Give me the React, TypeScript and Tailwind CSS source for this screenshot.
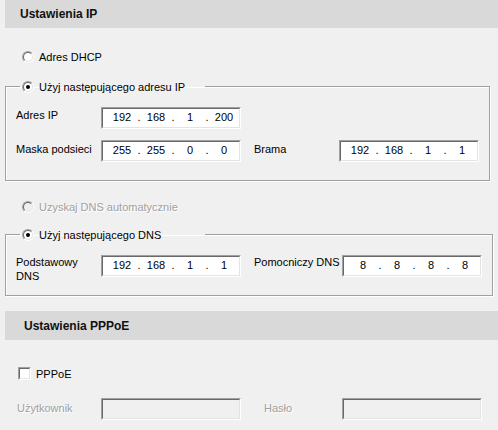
import React from "react";

function Radio({ checked, disabled }: { checked?: boolean; disabled?: boolean }) {
  return (
    <span className="flex h-[12px] w-[12px] shrink-0 rounded-full border border-t-[#a0a0a0] border-l-[#a0a0a0] border-b-[#ffffff] border-r-[#ffffff]">
      <span
        className={
          "flex flex-1 items-center justify-center rounded-full border border-t-[#696969] border-l-[#696969] border-b-[#e3e3e3] border-r-[#e3e3e3] " +
          (disabled ? "bg-[#f0f0f0]" : "bg-white")
        }
      >
        {checked ? <span className="h-[4px] w-[4px] rounded-full bg-black" /> : null}
      </span>
    </span>
  );
}

function Checkbox() {
  return (
    <span className="flex h-[13px] w-[13px] shrink-0 border border-t-[#a0a0a0] border-l-[#a0a0a0] border-b-[#ffffff] border-r-[#ffffff]">
      <span className="flex-1 border border-t-[#696969] border-l-[#696969] border-b-[#e3e3e3] border-r-[#e3e3e3] bg-white" />
    </span>
  );
}

function Sunken({ children, disabled, w = "w-[140px]" }: { children?: React.ReactNode; disabled?: boolean; w?: string }) {
  return (
    <div className={"flex h-[22px] shrink-0 border border-t-[#a0a0a0] border-l-[#a0a0a0] border-b-[#ffffff] border-r-[#ffffff] " + w}>
      <div
        className={
          "flex flex-1 items-start border border-t-[#696969] border-l-[#696969] border-b-[#e3e3e3] border-r-[#e3e3e3] " +
          (disabled ? "bg-[#f0f0f0]" : "bg-white")
        }
      >
        {children}
      </div>
    </div>
  );
}

function IpField({ parts }: { parts: string[] }) {
  return (
    <Sunken>
      <div className="flex pl-[4px] pt-[1px] leading-[14px]">
        {parts.map((p, i) => (
          <React.Fragment key={i}>
            {i > 0 ? <span className="w-[4px] text-center">.</span> : null}
            <span className="w-[30px] text-center">{p}</span>
          </React.Fragment>
        ))}
      </div>
    </Sunken>
  );
}

const disabledText = "text-[#a0a0a0] [text-shadow:1px_1px_0_#ffffff]";
const groupBox =
  "ml-[5px] w-[484px] border border-[#a0a0a0] px-[10px] pt-[14px] shadow-[inset_1px_1px_0_#ffffff,1px_1px_0_#ffffff]";

export default function App() {
  return (
    <div className="h-[430px] w-[498px] overflow-hidden bg-[#f0f0f0] font-['Liberation_Sans',Arial,sans-serif] text-[11px] leading-[14px] text-black">
      <div className="ml-[5px] flex h-[28px] items-center bg-[#d9d9d9] pl-[15px] text-[12px] font-bold text-[#111]">
        Ustawienia IP
      </div>

      <div className="ml-[22px] mt-[22px] flex h-[13px] items-center gap-[5px]">
        <Radio />
        <span>Adres DHCP</span>
      </div>

      <fieldset className={groupBox + " mt-[17px] pb-[18px]"}>
        <legend className="ml-[4px] w-[185px] pl-[2px]">
          <span className="flex h-[13px] items-center gap-[5px] whitespace-nowrap">
            <Radio checked />
            <span>Użyj następującego adresu IP</span>
          </span>
        </legend>
        <div className="flex items-start">
          <span className="w-[85px] pt-[1px]">Adres IP</span>
          <IpField parts={["192", "168", "1", "200"]} />
        </div>
        <div className="mt-[11px] flex items-start">
          <span className="w-[85px] pt-[2px]">Maska podsieci</span>
          <IpField parts={["255", "255", "0", "0"]} />
          <span className="ml-[13px] w-[85px] pt-[2px]">Brama</span>
          <IpField parts={["192", "168", "1", "1"]} />
        </div>
      </fieldset>

      <div className={"ml-[22px] mt-[19px] flex h-[13px] items-center gap-[5px] " + disabledText}>
        <Radio disabled />
        <span>Uzyskaj DNS automatycznie</span>
      </div>

      <fieldset className={groupBox + " mt-[15px] pb-[12px]"}>
        <legend className="ml-[4px] w-[185px] pl-[2px]">
          <span className="flex h-[13px] items-center gap-[5px] whitespace-nowrap">
            <Radio checked />
            <span>Użyj następującego DNS</span>
          </span>
        </legend>
        <div className="flex items-start">
          <span className="w-[85px]">
            Podstawowy
            <br />
            DNS
          </span>
          <IpField parts={["192", "168", "1", "1"]} />
          <span className="ml-[13px] w-[88px] whitespace-nowrap">Pomocniczy DNS</span>
          <IpField parts={["8", "8", "8", "8"]} />
        </div>
      </fieldset>

      <div className="ml-[5px] mt-[15px] flex h-[29px] items-center bg-[#d9d9d9] pl-[19px] text-[12px] font-bold text-[#111]">
        Ustawienia PPPoE
      </div>

      <div className="ml-[18px] mt-[27px] flex h-[13px] items-center gap-[5px]">
        <Checkbox />
        <span>PPPoE</span>
      </div>

      <div className="ml-[17px] mt-[18px] flex items-start">
        <span className={"w-[84px] pt-[3px] " + disabledText}>Użytkownik</span>
        <Sunken disabled />
        <span className={"ml-[23px] w-[78px] pt-[3px] " + disabledText}>Hasło</span>
        <Sunken disabled />
      </div>
    </div>
  );
}
